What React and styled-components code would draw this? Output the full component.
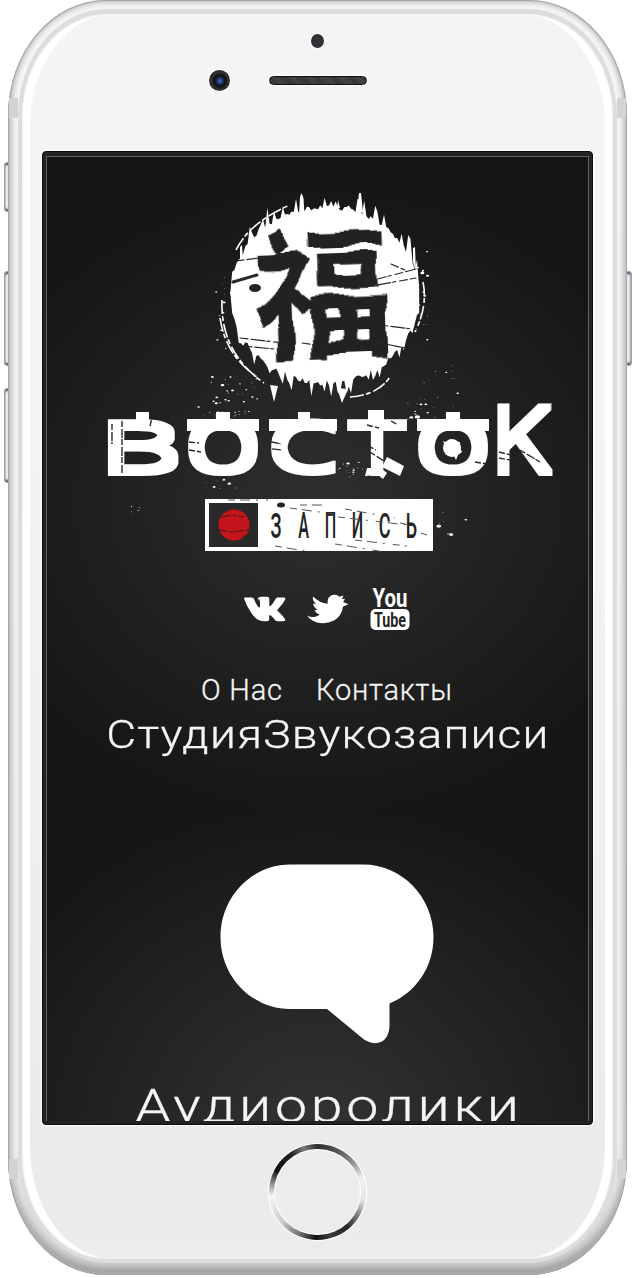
import React from "react";
import styled, { createGlobalStyle } from "styled-components";

const Global = createGlobalStyle`
  body { margin: 0; background: #fff; }
  * { box-sizing: border-box; }
`;

const Stage = styled.div`
  position: relative;
  width: 632px;
  height: 1278px;
  padding: 0 5px 3px 8px;
  overflow: hidden;
  font-family: Roboto, "Liberation Sans", sans-serif;
`;

const SideButton = styled.div`
  position: absolute;
  left: ${(p) => p.$x}px;
  top: ${(p) => p.$y}px;
  width: 7px;
  height: ${(p) => p.$h}px;
  border-radius: 3px;
  border: 1px solid #9c9ea0;
  background: linear-gradient(90deg, #c5c7c9, #f4f5f6 40%, #b6b8ba);
  box-shadow: inset 0 3px 2px -1px #55585a, inset 0 -3px 2px -1px #55585a;
`;

const Body = styled.div`
  position: relative;
  width: 619px;
  height: 1275px;
  padding: 9px 10px 12px;
  border-radius: 98px / 116px;
  background: linear-gradient(#f4f5f5, #eceeed 90%, #c9cbcb);
  box-shadow: inset 0 0 1px 1px #a2a4a6, inset 0 1px 5px 2px #c6c8ca,
    inset 0 -5px 7px 1px #8f9193;
`;

const Antenna = styled.div`
  position: absolute;
  left: ${(p) => p.$x}px;
  top: ${(p) => p.$y}px;
  width: 9px;
  height: 20px;
  background: #d1d4d3;
`;

const Ring = styled.div`
  height: 100%;
  border-style: solid;
  border-color: #dcdedd;
  border-width: 5px 4px 4px;
  border-radius: 89px / 107px;
  background: #fff;
  padding: 0 8px;
  box-shadow: inset 0 0 2px #cfd1d0;
`;

const Face = styled.div`
  height: 100%;
  border-radius: 84px / 112px;
  background: linear-gradient(#f4f4f4, #f3f4f4 30%, #eaecec 90%, #ebedec);
  display: flex;
  flex-direction: column;
  align-items: center;
`;

const TopBezel = styled.div`
  width: 100%;
  height: 137px;
  flex: none;
  display: flex;
  flex-direction: column;
  align-items: center;
  padding-top: 20px;
`;

const Sensor = styled.div`
  width: 13px;
  height: 14px;
  border-radius: 50%;
  background: #303136;
  box-shadow: 0 0 1px 1px #fff;
`;

const SpeakerRow = styled.div`
  display: flex;
  align-items: center;
  gap: 39px;
  margin: 22px 59px 0 0;
`;

const Camera = styled.div`
  width: 21px;
  height: 21px;
  border-radius: 50%;
  background: radial-gradient(circle at 52% 52%, #3c5aa8 0 8%, #17275c 22%, #10182f 30%, #111 38%, #333 55%, #222 75%);
  box-shadow: 0 0 1px 1px #fff;
`;

const Speaker = styled.div`
  width: 98px;
  height: 9px;
  border-radius: 5px;
  border: 1px solid #111;
  background: repeating-linear-gradient(45deg, #303030 0 1px, #484848 1px 2px);
  box-shadow: 0 0 1px 1px #fff;
`;

const Screen = styled.div`
  flex: none;
  width: 551px;
  height: 974px;
  padding: 4px 3px 3px;
  border-radius: 4px;
  background: #222323;
  border: 1px solid #0c0c0c;
  box-shadow: 0 0 1px 1px #fff;
`;

const Page = styled.main`
  height: 100%;
  overflow: hidden;
  border: 1px solid #626060;
  border-bottom: 0;
  background:
    radial-gradient(ellipse 360px 315px at 50% 345px, #2f2f2f, rgba(40, 40, 40, 0.65) 50%, transparent) 0 0 / 100% 660px no-repeat,
    radial-gradient(ellipse 360px 330px at 50% 330px, #333, rgba(44, 44, 44, 0.65) 50%, transparent) 0 645px / 100% 400px no-repeat,
    #161616;
  color: #f5f5f5;
  display: flex;
  flex-direction: column;
  align-items: center;
`;

const LogoSvg = styled.svg`
  display: block;
  flex: none;
  width: 543px;
  height: 400px;
  overflow: visible;
`;

const Social = styled.div`
  display: flex;
  gap: 21px;
  margin: 30px 0 0 18px;
  align-items: center;
  height: 48px;

  svg {
    overflow: visible;
  }
`;

const Nav = styled.nav`
  display: flex;
  gap: 34px;
  height: 40px;
  margin: 39px 0 0 18px;
  align-items: center;
`;

const NavLink = styled.a`
  font-size: 29px;
  font-weight: 300;
  line-height: 40px;
  letter-spacing: ${(p) => p.$track}px;
  margin-right: ${(p) => -p.$track}px;
  white-space: nowrap;
  -webkit-text-stroke: 0.3px #f5f5f5;
`;

const Title = styled.h2`
  margin: ${(p) => p.$top}px 0 0 ${(p) => p.$shift}px;
  font-size: ${(p) => p.$size}px;
  line-height: 56px;
  font-weight: 300;
  letter-spacing: ${(p) => p.$track}px;
  transform: scaleX(${(p) => p.$stretch});
  white-space: nowrap;
  flex: none;
  -webkit-text-stroke: 0.3px #f5f5f5;
`;

const Bubble = styled.svg`
  display: block;
  flex: none;
  width: 214px;
  height: 180px;
  margin: ${(p) => p.$top}px 0 0 19px;
`;

const BottomBezel = styled.div`
  flex: 1;
  padding-top: 18px;
`;

const Home = styled.div`
  width: 99px;
  height: 98px;
  padding: 5px;
  border-radius: 50%;
  border: 1px solid #fff;
  background: conic-gradient(#2c2d2f, #4a4b4d 20deg, #8f9092 50deg, #eee 72deg, #e6e6e6 100deg, #8a8b8d 118deg, #242528 140deg, #3a3b3e 165deg, #111 182deg, #77787a 205deg, #ccc 230deg, #f6f6f6 265deg, #777 284deg, #0e0f12 298deg, #222326 325deg, #77787a 342deg, #2c2d2f);
`;

const HomeFace = styled.div`
  height: 100%;
  border-radius: 50%;
  background: #ebecec;
  border: 1px solid #fff;
`;

function rng(seed) {
  let s = seed;
  return () => {
    s = (s * 16807) % 2147483647;
    return s / 2147483647;
  };
}

/* Disc with torn, vertically streaked edges. */
function discPath() {
  const r = rng(4217);
  const cx = 325, cy = 297, R = 95;
  const top = [], bottom = [];
  for (let x = cx - R; x <= cx + R; x += 2.2) {
    const h = Math.sqrt(Math.max(0, R * R - (x - cx) ** 2));
    const edge = Math.abs(x - cx) / R;
    const spikeA = r() > 0.6 ? r() * (12 + 14 * edge) : r() * 5;
    const spikeB = r() > 0.6 ? r() * 18 : r() * 6;
    top.push([x, cy - h * 0.95 - spikeA + 3]);
    bottom.push([x, cy + h * 0.96 + spikeB - 8]);
  }
  return "M" + top.concat(bottom.reverse()).map((p) => p.map((n) => n.toFixed(1)).join(" ")).join("L") + "Z";
}

function specks(seed, n, x, y, w, h, max) {
  const r = rng(seed);
  return Array.from({ length: n }, (_, i) => {
    const size = 0.3 + r() * r() * max * 1.3;
    return <ellipse key={i} cx={x + r() * w} cy={y + r() * h} rx={size * 1.3} ry={size * 0.8} />;
  });
}

/* letter, left, right, top, baseline */
const LETTERS = [
  ["В", 108, 178, 419, 476],
  ["О", 187, 259, 419, 476],
  ["С", 269, 337, 419, 476],
  ["Т", 347, 407, 419, 476],
  ["О", 417, 489, 419, 476],
  ["К", 499, 553, 404, 476],
];

/* horizontal ink extents of each glyph, in em */
const INK = {
  В: [0.082, 0.553],
  О: [0.049, 0.553],
  С: [0.052, 0.535],
  Т: [0.022, 0.58],
  К: [0.082, 0.6],
};

const SMALL = [
  ["З", 276], ["А", 303.5], ["П", 330.5], ["И", 357.5], ["С", 384.5], ["Ь", 411.5],
];

const SPREAD = 3;

function Logo() {
  return (
    <LogoSvg viewBox="46 157 543 400">
      <defs>
        <filter id="rough" x="-5%" y="-5%" width="110%" height="110%">
          <feTurbulence type="fractalNoise" baseFrequency="0.035" numOctaves="1" seed="5" />
          <feDisplacementMap in="SourceGraphic" scale="12" xChannelSelector="R" yChannelSelector="G" />
        </filter>
        <filter id="heavy" filterUnits="userSpaceOnUse" x="90" y="390" width="480" height="100">
          <feMorphology operator="dilate" radius={`1 ${SPREAD}`} />
        </filter>
      </defs>
      <g fill="#fff">
        <path d={discPath()} />
        <path d="M299 215l1-18 1.500-4 2 5 1 17zM357 212l2-19 2 0 2 19zM337 208l1-8 2 8zM270 385l4 17 4-16zM337 388l5 15 6-14zM240 262v-15l2-2 1 14zM413 262v-14l2-1 1 25z" />
        <path d="M222 300q-2 52 42 83M220 318q6 38 36 58M423 282q5 24-8 50M236 250q14-28 54-45M350 397q28-2 40-20" fill="none" stroke="#fff" strokeWidth="1.600" strokeDasharray="14 2 5 3" />
        {specks(31, 30, 203, 375, 60, 45, 1.1)}
        {specks(77, 16, 420, 365, 50, 50, 1)}
        {specks(11, 18, 418, 250, 10, 90, 1.2)}
        {specks(91, 14, 214, 270, 12, 90, 1)}
      </g>
      <text transform="translate(255 349) rotate(-2) scale(1.02 1.030)" fontFamily='"Noto Sans CJK SC", sans-serif' fontWeight="700" fontSize="137" fill="#232323" filter="url(#rough)">福</text>
      <g stroke="#292929" fill="none" strokeLinecap="round">
        <path d="M233 282l24-7" strokeWidth="3" />
        <path d="M236 261l46-6M362 283l54-14M366 287l50-9M380 325l40 5M240 338l44 5M244 346l40 4M376 342l34 7M391 264l14 6M302 343l22 3" strokeWidth="1.200" strokeDasharray="8 3 14 2 3 4" />
      </g>
      <ellipse cx="255" cy="288" rx="6" ry="4" fill="#232323" />

      <g fill="#fff" fontFamily='"DejaVu Sans Mono", monospace' filter="url(#heavy)">
        {LETTERS.map(([c, x0, x1, y0, y1], i) => {
          const [a, b] = INK[c];
          const round = c === "О" || c === "С" ? 1.4 : 0;
          const sx = (x1 - x0 - 2) / ((b - a) * 100);
          const sy = (y1 - y0 - 2 * SPREAD) / (73 + 2 * round);
          const tx = x0 + 1 - a * 100 * sx;
          const ty = y1 - SPREAD - round * sy;
          return (
            <text key={i} fontSize="100" transform={`translate(${tx} ${ty}) scale(${sx} ${sy})`}>
              {c}
            </text>
          );
        })}
      </g>
      <g fill="#fff">
        <rect x="136" y="412" width="13" height="9" />
        <rect x="216" y="412" width="14" height="9" />
        <rect x="298" y="412" width="12" height="9" />
        <rect x="368" y="410" width="16" height="11" />
        <rect x="446" y="412" width="14" height="9" />
        <rect x="187" y="419" width="72" height="12" />
        <rect x="269" y="419" width="68" height="12" />
        <rect x="417" y="419" width="72" height="12" />
        <path d="M387 457l17 9-4 10-18-9zM367 468l14 0 6 5-4 6-5-4-13 1z" />
        <circle cx="452" cy="448" r="9" />
        <path d="M443 441l4 2 3-4 4 3 6 0 0 6 2 4-4 3-2 5-2-4-7-1-1-6z" />
        {specks(13, 18, 186, 398, 60, 18, 1.2)}
        {specks(29, 14, 404, 402, 32, 18, 1.6)}
        {specks(51, 18, 337, 462, 30, 17, 1.2)}
        {specks(64, 8, 205, 476, 35, 14, 1.2)}
        {specks(45, 8, 435, 512, 32, 26, 1.4)}
        {specks(8, 5, 130, 505, 22, 12, 1.2)}
      </g>
      <g stroke="#292929" fill="none">
        <path d="M122 421v52M112 424v20M189 442l10 1M189 450l12 2M263 440l18 4M264 448l18 2M367 425l12 3M391 421l7 4M368 446l8 4M370 452l14 9M499 452l12 3M499 458l11 2M520 450l20 12M475 462l12 2M150 426l2-8" strokeWidth="1.400" strokeDasharray="6 2 9 1" />
      </g>

      <rect x="205" y="499" width="228" height="52" fill="#fff" />
      <rect x="209" y="503" width="49" height="44" fill="#292929" />
      <circle cx="234" cy="525" r="15.500" fill="#c5141b" />
      <path d="M222 517l10-2 12 2M219 530l12 2 18-2M242 537l8-4" fill="none" stroke="#5b1a1b" strokeWidth="1.300" strokeDasharray="9 2 4 1" />
      <g fill="#222" fontFamily="Roboto, sans-serif" fontWeight="500" fontSize="36" textAnchor="middle">
        {SMALL.map(([c, x]) => (
          <text key={c} transform={`translate(${x} 538) scale(${c === "П" || c === "И" || c === "А" ? 0.45 : 0.5} 1)`}>{c}</text>
        ))}
      </g>
      <g stroke="#555" fill="none" strokeWidth="1" strokeDasharray="7 5 10 6 2 8">
        <path d="M228 500h40M290 508l44 6M300 505h25M345 509l50 9M338 517l70 8M355 540l52 6M275 546l30 5M335 544l50 8M400 523l14 3M421 533l6 2" />
      </g>
      <ellipse cx="281" cy="505" rx="4" ry="2.500" fill="#222" />
    </LogoSvg>
  );
}

function VkIcon() {
  return (
    <svg width="43" height="26" viewBox="0 0 43 26">
      <path fill="#fff" d="M1 2.500Q1 1.500 2.500 1.500H9Q10.300 1.500 11 3Q13.500 9.500 16 11.500Q17 12 17 10V5.500Q17 3.500 14.500 2.800Q15.500 .8 18.500.8H24Q26.300.8 26.300 3V9.500Q26.500 11 28 9.500Q30.500 7 32.500 3Q33.200 1.500 35 1.500H41Q43 1.500 42 3.800Q40 8 34.500 13.500Q34 14.200 35 15.200Q40 19.500 42 23Q43 25.200 40.500 25.200H34.500Q33 25.200 32 24Q28.500 19.500 27 19Q26.200 19 26.200 21V23.500Q26.200 25.200 24 25.200H21.500Q14 25.200 9 18Q3.500 10.500 1 2.500Z" />
    </svg>
  );
}

function BirdIcon() {
  return (
    <svg width="42" height="30" viewBox="0 0 42 30">
      <path fill="#fff" d="M0 21.500Q4.500 24 9 22.500Q12 21.500 12.500 20.500Q8.500 19 7.500 16.200L10.500 15.800Q6.500 13.500 6.200 9.500L9 10Q5 6 6 2.500Q12.500 9 20.500 9.800Q20 1.800 26.500.8Q30 .2 32.500 2.800L36.500 1.500L35 5.300L38 4.800Q37.200 6.800 36 8L41.500 10.200L36 12.500Q34.800 22 27 26.500Q19 30.500 10 28.500Q3.500 26.500 0 21.500Z" />
    </svg>
  );
}

function YouTubeIcon() {
  return (
    <svg width="40" height="44" viewBox="0 0 40 44">
      <g fontFamily="Roboto, sans-serif" fontWeight="700">
        <text x="2.500" y="20" fontSize="25.500" textLength="35" lengthAdjust="spacingAndGlyphs" fill="#fff">You</text>
        <rect x="0.500" y="22" width="39" height="21" rx="5" fill="#fff" />
        <text x="4" y="39.500" fontSize="19.500" textLength="32" lengthAdjust="spacingAndGlyphs" fill="#242424">Tube</text>
      </g>
    </svg>
  );
}

export default function App() {
  return (
    <Stage>
      <Global />
      <SideButton $x={4} $y={162} $h={50} />
      <SideButton $x={4} $y={271} $h={95} />
      <SideButton $x={4} $y={388} $h={95} />
      <SideButton $x={625} $y={271} $h={95} />
      <Body>
        <Antenna $x={1} $y={98} />
        <Antenna $x={609} $y={98} />
        <Antenna $x={1} $y={1159} />
        <Antenna $x={609} $y={1159} />
        <Ring>
          <Face>
            <TopBezel>
              <Sensor />
              <SpeakerRow>
                <Camera />
                <Speaker />
              </SpeakerRow>
            </TopBezel>
            <Screen>
              <Page>
                <Logo />
                <Social>
                  <VkIcon />
                  <BirdIcon />
                  <YouTubeIcon />
                </Social>
                <Nav>
                  <NavLink $track={0.8}>О Нас</NavLink>
                  <NavLink $track={0.8}>Контакты</NavLink>
                </Nav>
                <Title $top={-3} $size={39} $track={1} $shift={20} $stretch={1.18}>СтудияЗвукозаписи</Title>
                <Bubble $top={101} viewBox="220 864 214 180">
                  <path fill="#fff" d="M290 864.500H363C402 864.500 433.500 897 433.500 937C433.500 968 415 993 389.500 1003.500V1026C389 1042 377 1047.500 364 1039.500L327 1009H290C252 1009 220.500 977 220.500 937C220.500 897 252 864.500 290 864.500Z" />
                </Bubble>
                <Title $top={34} $size={47} $track={3} $shift={22} $stretch={1.22}>Аудиоролики</Title>
              </Page>
            </Screen>
            <BottomBezel>
              <Home>
                <HomeFace />
              </Home>
            </BottomBezel>
          </Face>
        </Ring>
      </Body>
    </Stage>
  );
}
